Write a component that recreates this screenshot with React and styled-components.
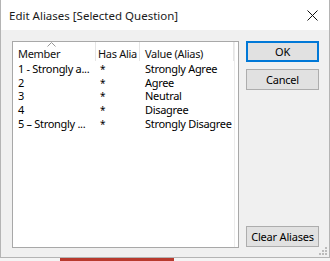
import styled, { createGlobalStyle } from 'styled-components';

const GlobalStyle = createGlobalStyle`
  html, body {
    margin: 0;
    padding: 0;
    background: #f3f3f3;
  }
  body {
    font-family: "Noto Sans", "Open Sans", sans-serif;
    font-size: 11px;
    color: #000;
  }
`;

const aliases = [
  { member: '1 - Strongly a...', has: '*', value: 'Strongly Agree' },
  { member: '2', has: '*', value: 'Agree' },
  { member: '3', has: '*', value: 'Neutral' },
  { member: '4', has: '*', value: 'Disagree' },
  { member: '5 \u2013 Strongly ...', has: '*', value: 'Strongly Disagree' },
];

const App = () => {
  return (
    <Page>
      <GlobalStyle />
      <Window>
        <TitleBar>
          <Title>Edit Aliases [Selected Question]</Title>
          <CloseButton aria-label="Close">
            <svg width="11" height="11" viewBox="0 0 11 11">
              <path d="M0.5 0.5 L10.5 10.5 M10.5 0.5 L0.5 10.5" stroke="#111" strokeWidth="1" />
            </svg>
          </CloseButton>
        </TitleBar>
        <Body>
          <ListBox>
            <HeaderRow>
              <HeaderCell $width={83}>
                <SortCaret width="9" height="5" viewBox="0 0 9 5">
                  <polyline points="0.5,4.5 4.5,0.5 8.5,4.5" fill="none" stroke="#999" strokeWidth="1" />
                </SortCaret>
                Member
              </HeaderCell>
              <HeaderCell $width={44} $pad={2}>Has Alia</HeaderCell>
              <HeaderCell $width={94}>Value (Alias)</HeaderCell>
            </HeaderRow>
            {aliases.map((row, i) => (
              <Row key={i}>
                <Cell $width={83}>{row.member}</Cell>
                <Cell $width={44} $pad={4}>
                  <Star>{row.has}</Star>
                </Cell>
                <Cell $width={94}>{row.value}</Cell>
              </Row>
            ))}
          </ListBox>
          <Buttons>
            <Button $primary>OK</Button>
            <Button>Cancel</Button>
            <Spacer />
            <Button>Clear Aliases</Button>
          </Buttons>
          <Grip width="8" height="8" viewBox="0 0 8 8">
            <rect x="6" y="0" width="2" height="2" fill="#bbb" />
            <rect x="3" y="3" width="2" height="2" fill="#bbb" />
            <rect x="6" y="3" width="2" height="2" fill="#bbb" />
            <rect x="0" y="6" width="2" height="2" fill="#bbb" />
            <rect x="3" y="6" width="2" height="2" fill="#bbb" />
            <rect x="6" y="6" width="2" height="2" fill="#bbb" />
          </Grip>
        </Body>
      </Window>
      <Taskbar>
        <RedBar />
      </Taskbar>
    </Page>
  );
};

const Page = styled.div`
  width: 330px;
  height: 261px;
  overflow: hidden;
`;

const Window = styled.div`
  width: 330px;
  height: 258px;
  box-sizing: border-box;
  border-left: 1px solid #b4b4b4;
  border-right: 1px solid #b4b4b4;
  border-bottom: 1px solid #b4b4b4;
  display: flex;
  flex-direction: column;
  background: #f0f0f0;
`;

const TitleBar = styled.div`
  height: 30px;
  background: #fff;
  display: flex;
  align-items: center;
  padding: 0 10px 0 8px;
  flex-shrink: 0;
`;

const Title = styled.div`
  flex: 1;
  font-size: 11.5px;
  color: #1a1a1a;
`;

const CloseButton = styled.div`
  width: 11px;
  height: 11px;
  display: flex;
  margin-right: 1px;
  svg {
    display: block;
  }
`;

const Body = styled.div`
  flex: 1;
  position: relative;
  display: flex;
  gap: 7px;
  padding: 11px 9px 9px 11px;
`;

const ListBox = styled.div`
  width: 227px;
  box-sizing: border-box;
  border: 1px solid #a8a8a8;
  background: #fff;
  position: relative;
  &::after {
    content: '';
    position: absolute;
    top: 0;
    bottom: 0;
    left: 221px;
    width: 1px;
    background: #ececec;
  }
`;

const HeaderRow = styled.div`
  display: flex;
  height: 19px;
  margin-bottom: 1px;
`;

const HeaderCell = styled.div`
  position: relative;
  width: ${(p) => p.$width}px;
  box-sizing: border-box;
  padding: 4px 0 0 ${(p) => p.$pad ?? 5}px;
  border-right: 1px solid #e5e5e5;
  color: #111;
  white-space: nowrap;
  overflow: hidden;
  line-height: 15px;
  letter-spacing: -0.3px;
`;

const SortCaret = styled.svg`
  position: absolute;
  top: 0;
  left: 34px;
`;

const Row = styled.div`
  display: flex;
  height: 13.7px;
  line-height: 13.7px;
  letter-spacing: -0.3px;
`;

const Cell = styled.div`
  width: ${(p) => p.$width}px;
  box-sizing: border-box;
  padding-left: ${(p) => p.$pad ?? 5}px;
  white-space: nowrap;
`;

const Star = styled.span`
  display: inline-block;
  font-size: 10px;
`;

const Buttons = styled.div`
  width: 73px;
  display: flex;
  flex-direction: column;
  gap: 7px;
  padding-bottom: 1px;
`;

const Spacer = styled.div`
  flex: 1;
`;

const Button = styled.button`
  height: 21px;
  box-sizing: border-box;
  width: 73px;
  padding: 0;
  font-family: inherit;
  font-size: 11px;
  letter-spacing: -0.2px;
  white-space: nowrap;
  color: #000;
  background: #e1e1e1;
  border: ${(p) => (p.$primary ? '2px solid #0078d7' : '1px solid #adadad')};
`;

const Grip = styled.svg`
  position: absolute;
  right: 2px;
  bottom: 2px;
`;

const Taskbar = styled.div`
  height: 3px;
  background: #f4f4f4;
  padding-left: 60px;
`;

const RedBar = styled.div`
  width: 114px;
  height: 3px;
  background: #b83a2e;
`;

export default App;
